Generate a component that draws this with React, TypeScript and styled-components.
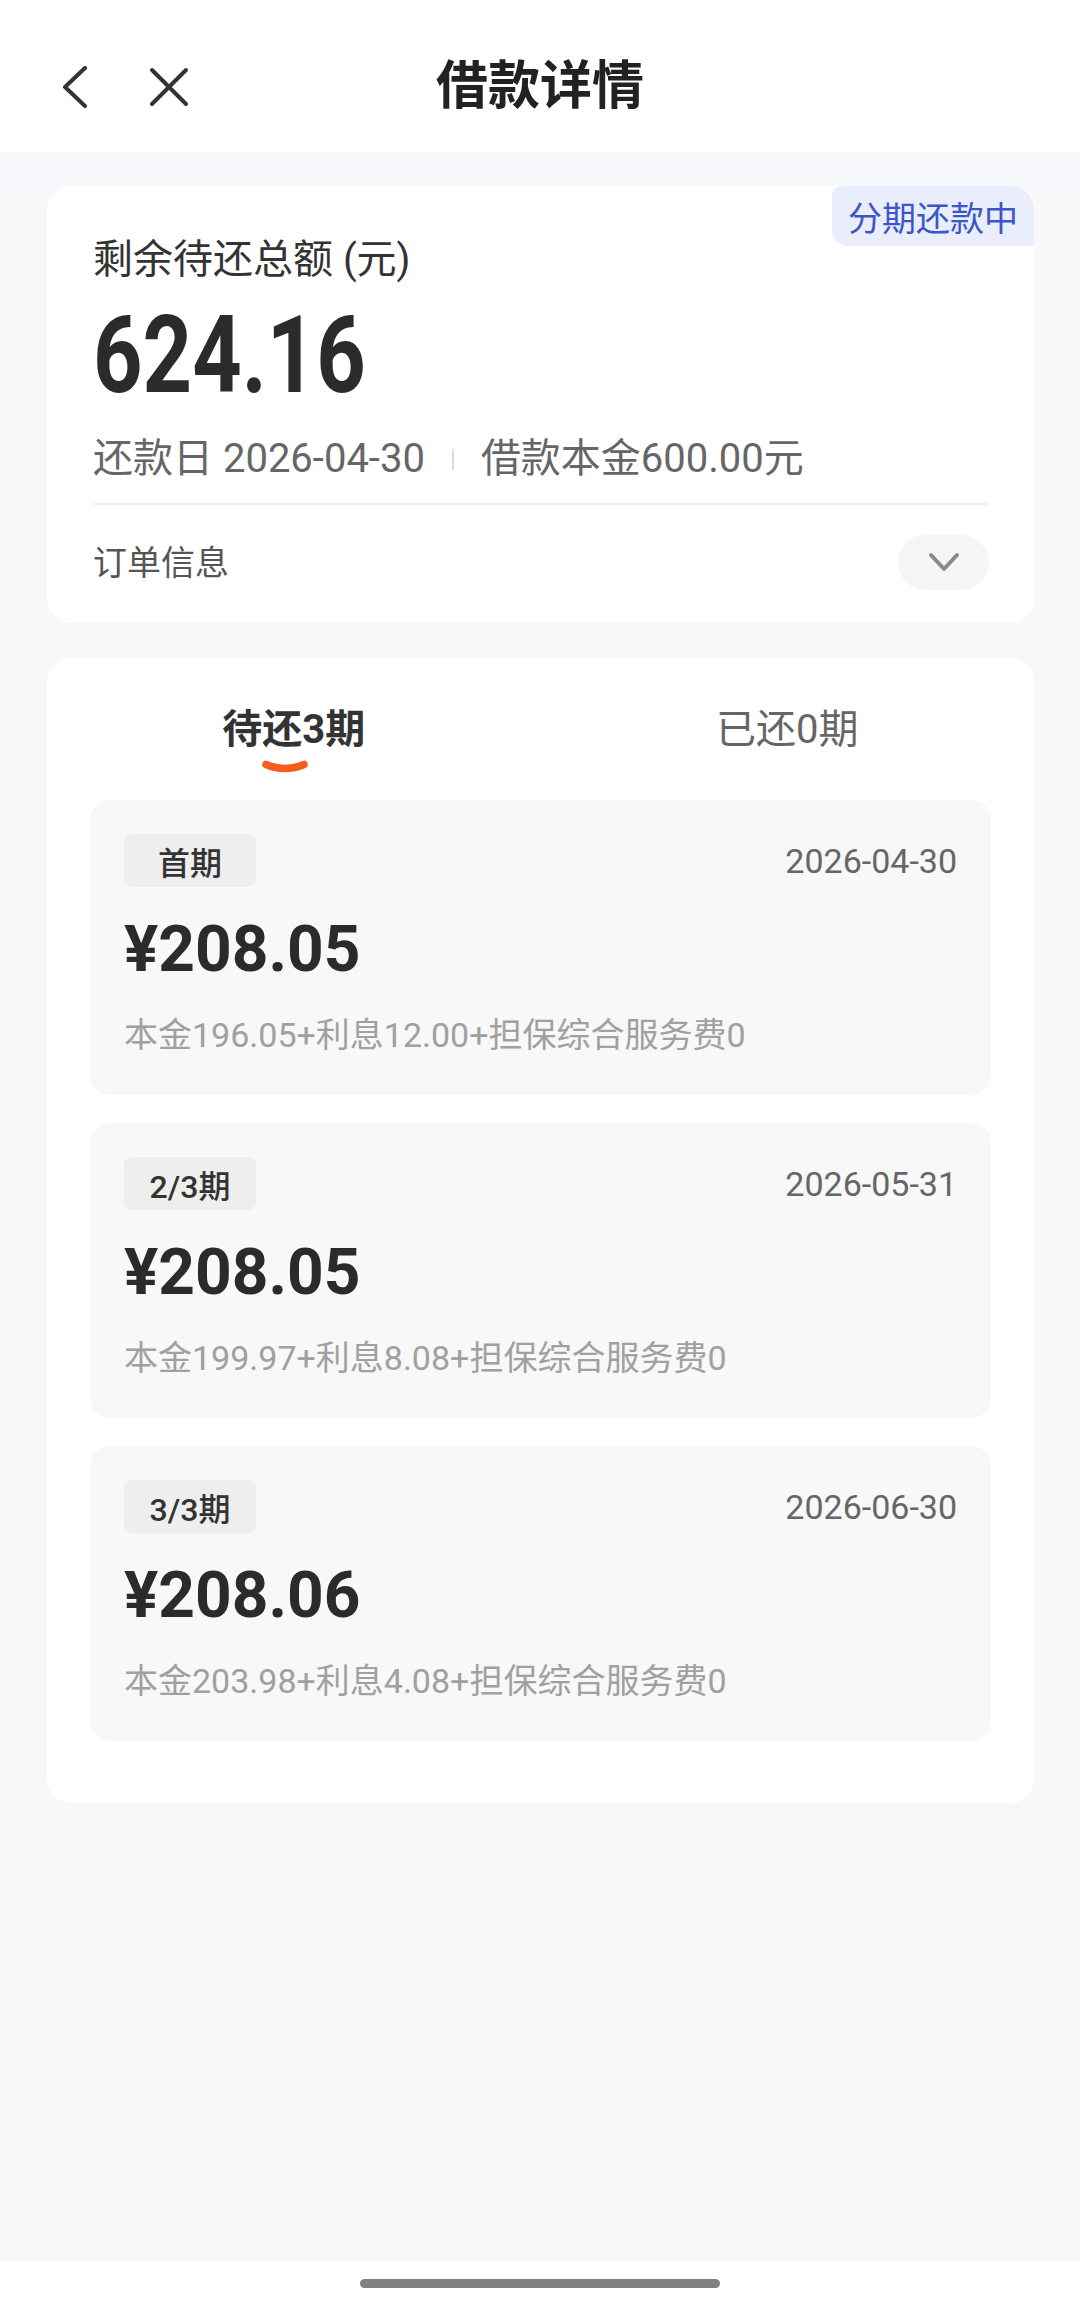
import React, { useState } from "react"
import styled, { createGlobalStyle } from "styled-components"

const GlobalStyle = createGlobalStyle`
  html, body {
    margin: 0;
    padding: 0;
    background: #f8f8f8;
  }
  body {
    font-family: "Roboto", "Noto Sans CJK SC", sans-serif;
    color: #333;
  }
  * { box-sizing: border-box; }
`

const Page = styled.div`
  min-height: 100vh;
  display: flex;
  flex-direction: column;
`

const Header = styled.header`
  height: 152px;
  padding-top: 22px;
  background: #fff;
  display: grid;
  grid-template-columns: 1fr auto 1fr;
  align-items: center;
`

const NavIcons = styled.div`
  display: flex;
  align-items: center;
  padding-left: 62px;
  gap: 61px;
  svg { display: block; }
`

const Title = styled.h1`
  margin: 0;
  font-size: 52px;
  line-height: 1;
  font-weight: 700;
  color: #222;
`

const Band = styled.div`
  height: 34px;
  background: #f8f9fd;
`

const Main = styled.main`
  flex: 1;
  padding: 0 46px 40px 47px;
`

const SummaryCard = styled.section`
  position: relative;
  background: #fff;
  border-radius: 24px;
  padding: 54px 45px 33px 46px;
`

const StatusBadge = styled.div`
  position: absolute;
  top: 0;
  right: 0;
  width: 202px;
  height: 60px;
  display: flex;
  align-items: center;
  justify-content: center;
  background: #e9edfc;
  color: #3b56c9;
  font-size: 34px;
  border-radius: 10px 24px 0 16px;
`

const Label = styled.div`
  font-size: 40px;
  line-height: 40px;
  color: #333;
`

const Total = styled.div`
  margin-top: 21px;
  font-size: 108px;
  line-height: 108px;
  font-weight: 700;
  color: #2b2b2b;
  transform: scaleX(0.8);
  transform-origin: left center;
`

const MetaLine = styled.div`
  margin-top: 30px;
  display: flex;
  align-items: center;
  font-size: 40px;
  line-height: 40px;
  color: #666;
`

const Sep = styled.span`
  width: 2px;
  height: 21px;
  background: #dddddd;
  margin: 0 27px;
`

const Divider = styled.div`
  margin-top: 24px;
  height: 2px;
  background: #f0f0f0;
`

const OrderRow = styled.div`
  margin-top: 30px;
  display: flex;
  align-items: center;
  justify-content: space-between;
  font-size: 34px;
  line-height: 34px;
  color: #555;
`

const ExpandButton = styled.button`
  width: 91px;
  height: 55px;
  border: none;
  border-radius: 28px;
  background: #f5f5f5;
  display: flex;
  align-items: center;
  justify-content: center;
  padding: 0;
`

const PlanCard = styled.section`
  margin-top: 35px;
  background: #fff;
  border-radius: 24px;
  padding: 52px 0 62px;
`

const Tabs = styled.div`
  display: grid;
  grid-template-columns: 1fr 1fr;
`

const Tab = styled.div<{ $active?: boolean }>`
  display: flex;
  flex-direction: column;
  align-items: center;
  font-size: 40px;
  line-height: 40px;
  font-weight: ${(p) => (p.$active ? 700 : 400)};
  color: ${(p) => (p.$active ? "#333" : "#666")};
  svg { display: block; margin: 10px 18px 0 0; }
`

const IndicatorGap = styled.div`
  height: 23px;
`

const List = styled.div`
  margin-top: 27px;
  padding: 0 43px;
  display: flex;
  flex-direction: column;
  gap: 28px;
`

const Installment = styled.div`
  background: #f8f8f8;
  border-radius: 20px;
  padding: 34px 34px 43px;
`

const TopRow = styled.div`
  display: flex;
  align-items: center;
  justify-content: space-between;
`

const PeriodTag = styled.span`
  width: 132px;
  height: 53px;
  border-radius: 8px;
  background: #eeeeee;
  display: flex;
  align-items: center;
  justify-content: center;
  font-size: 32px;
  font-weight: 500;
  color: #333;
`

const DueDate = styled.span`
  font-size: 34px;
  color: #666;
`

const Amount = styled.div`
  margin-top: 31px;
  font-size: 64px;
  line-height: 64px;
  font-weight: 700;
  color: #2b2b2b;
`

const Breakdown = styled.div`
  margin-top: 36px;
  font-size: 34px;
  line-height: 34px;
  color: #a0a0a0;
`

const BottomBar = styled.div`
  height: 48px;
  background: #fff;
  display: flex;
  justify-content: center;
  padding-top: 18px;
`

const HomeIndicator = styled.div`
  width: 360px;
  height: 9px;
  border-radius: 5px;
  background: #808080;
`

interface Period {
  tag: string
  date: string
  amount: string
  detail: string
}

const periods: Period[] = [
  { tag: "首期", date: "2026-04-30", amount: "¥208.05", detail: "本金196.05+利息12.00+担保综合服务费0" },
  { tag: "2/3期", date: "2026-05-31", amount: "¥208.05", detail: "本金199.97+利息8.08+担保综合服务费0" },
  { tag: "3/3期", date: "2026-06-30", amount: "¥208.06", detail: "本金203.98+利息4.08+担保综合服务费0" },
]

const BackIcon = () => (
  <svg width="26" height="42" viewBox="0 0 26 42" fill="none">
    <polyline points="23,2 3,21 23,40" stroke="#333" strokeWidth="4" strokeLinecap="round" strokeLinejoin="round" />
  </svg>
)

const CloseIcon = () => (
  <svg width="40" height="40" viewBox="0 0 40 40" fill="none">
    <path d="M3 3 L37 37 M37 3 L3 37" stroke="#333" strokeWidth="4" strokeLinecap="round" />
  </svg>
)

const ChevronDown = () => (
  <svg width="32" height="22" viewBox="0 0 32 22" fill="none">
    <polyline points="3,3 16,17 29,3" stroke="#8a8a8a" strokeWidth="4" strokeLinecap="round" strokeLinejoin="round" />
  </svg>
)

const TabIndicator = () => (
  <svg width="48" height="13" viewBox="0 0 48 13" fill="none">
    <path d="M5 4.5 Q24 12.5 43 4.5" stroke="#f55d18" strokeWidth="7.5" strokeLinecap="round" />
  </svg>
)

const App = () => {
  const [tab, setTab] = useState(0)

  return (
    <Page>
      <GlobalStyle />
      <Header>
        <NavIcons>
          <BackIcon />
          <CloseIcon />
        </NavIcons>
        <Title>借款详情</Title>
        <div />
      </Header>
      <Band />
      <Main>
        <SummaryCard>
          <StatusBadge>分期还款中</StatusBadge>
          <Label>剩余待还总额 (元)</Label>
          <Total>624.16</Total>
          <MetaLine>
            <span>还款日 2026-04-30</span>
            <Sep />
            <span>借款本金600.00元</span>
          </MetaLine>
          <Divider />
          <OrderRow>
            <span>订单信息</span>
            <ExpandButton>
              <ChevronDown />
            </ExpandButton>
          </OrderRow>
        </SummaryCard>

        <PlanCard>
          <Tabs>
            <Tab $active={tab === 0} onClick={() => setTab(0)}>
              待还3期
              {tab === 0 ? <TabIndicator /> : <IndicatorGap />}
            </Tab>
            <Tab $active={tab === 1} onClick={() => setTab(1)}>
              已还0期
              {tab === 1 ? <TabIndicator /> : <IndicatorGap />}
            </Tab>
          </Tabs>
          <List>
            {periods.map((p) => (
              <Installment key={p.tag}>
                <TopRow>
                  <PeriodTag>{p.tag}</PeriodTag>
                  <DueDate>{p.date}</DueDate>
                </TopRow>
                <Amount>{p.amount}</Amount>
                <Breakdown>{p.detail}</Breakdown>
              </Installment>
            ))}
          </List>
        </PlanCard>
      </Main>
      <BottomBar>
        <HomeIndicator />
      </BottomBar>
    </Page>
  )
}

export default App
